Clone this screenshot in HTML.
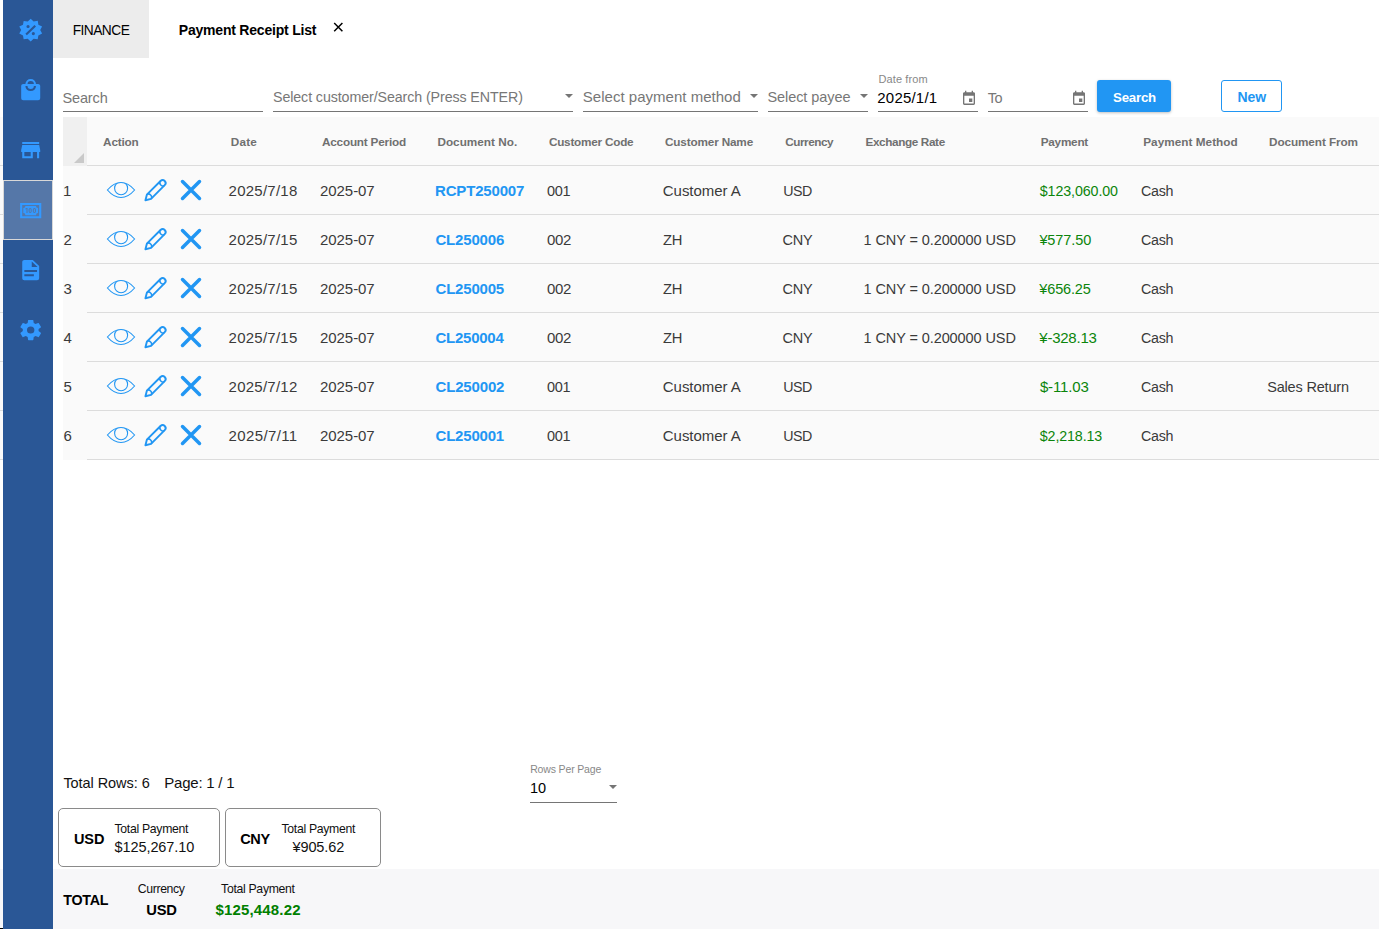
<!DOCTYPE html>
<html><head><meta charset="utf-8"><title>Payment Receipt List</title>
<style>html,body{margin:0;padding:0;background:#fff;}
body{width:1379px;height:929px;overflow:hidden;position:relative;font-family:"Liberation Sans",sans-serif;}
.t{position:absolute;white-space:pre;line-height:20px;height:20px;}
.ico{position:absolute;display:block;overflow:visible}
#strip{position:absolute;left:0;top:117px;width:3px;height:343px;background:#fafafa}
#strip2{position:absolute;left:0;top:869px;width:3px;height:59px;background:#f7f7f9;border-bottom:1px solid #000}
#side{position:absolute;left:3px;top:0;width:50px;height:929px;background:#2a5796}
#sel{position:absolute;left:3px;top:180px;width:50px;height:60px;box-sizing:border-box;border:1px solid #d8d8d8;background:#5577a8}
#tab1{position:absolute;left:53px;top:0;width:96px;height:58px;background:#ececec}
.ul{position:absolute;top:111px;height:1px;background:#757575}
.caret{position:absolute;width:0;height:0;border-left:4px solid transparent;border-right:4px solid transparent;border-top:4px solid #757575}
#btnS{position:absolute;left:1097px;top:80px;width:74px;height:32px;border-radius:3px;background:#2196f3;box-shadow:0 1px 3px rgba(0,0,0,.25)}
#btnN{position:absolute;left:1221px;top:80px;width:61px;height:32px;border-radius:3px;box-sizing:border-box;border:1px solid #2196f3;background:#fff}
#tbl{position:absolute;left:63px;top:117px;width:1316px;height:343px;background:#fafafa}
#corner{position:absolute;left:63px;top:117px;width:24px;height:49px;background:#f0f0f0}
#tri{position:absolute;left:74px;top:153px;width:0;height:0;border-left:10px solid transparent;border-bottom:10px solid #c9c9c9}
.hl{position:absolute;left:87px;width:1292px;height:1px;background:#dcdcdc}
.card{position:absolute;top:808px;height:57px;border:1px solid #8a8a8a;border-radius:5px;background:#fff}
#total{position:absolute;left:53px;top:869px;width:1326px;height:60px;background:#f7f7f9}
.sl{position:absolute;left:0;width:3px;height:1px;background:#dcdcdc}
</style></head>
<body>
<!-- sidebar -->
<div id="strip"></div><div id="strip2"></div><div class="sl" style="top:165px"></div><div class="sl" style="top:214px"></div><div class="sl" style="top:263px"></div><div class="sl" style="top:312px"></div><div class="sl" style="top:361px"></div><div class="sl" style="top:410px"></div><div class="sl" style="top:459px"></div>
<div id="side"></div>
<div id="sel"></div>
<svg class="ico" style="left:17.9px;top:18px" width="25.4" height="24.2" viewBox="0 0 24 24" preserveAspectRatio="none"><path fill="#3399ff" d="M18.65,2.85L19.26,6.71L22.77,8.5L21,12L22.78,15.5L19.24,17.29L18.63,21.15L14.74,20.54L11.97,23.3L9.19,20.5L5.33,21.14L4.71,17.25L1.22,15.47L3,11.97L1.23,8.5L4.74,6.69L5.35,2.86L9.22,3.5L12,0.69L14.77,3.46L18.65,2.85M9.5,7A1.5,1.5 0 0,0 8,8.5A1.5,1.5 0 0,0 9.5,10A1.5,1.5 0 0,0 11,8.5A1.5,1.5 0 0,0 9.5,7M14.5,14A1.5,1.5 0 0,0 13,15.5A1.5,1.5 0 0,0 14.5,17A1.5,1.5 0 0,0 16,15.5A1.5,1.5 0 0,0 14.5,14M8.41,17L17,8.41L15.59,7L7,15.59L8.41,17Z"/></svg>
<svg class="ico" style="left:17.9px;top:78px" width="25.4" height="24.2" viewBox="0 0 24 24" preserveAspectRatio="none"><path fill="#3399ff" d="M12,13A5,5 0 0,1 7,8H9A3,3 0 0,0 12,11A3,3 0 0,0 15,8H17A5,5 0 0,1 12,13M12,3A3,3 0 0,1 15,6H9A3,3 0 0,1 12,3M19,6H17A5,5 0 0,0 12,1A5,5 0 0,0 7,6H5C3.89,6 3,6.89 3,8V20A2,2 0 0,0 5,22H19A2,2 0 0,0 21,20V8C21,6.89 20.1,6 19,6Z"/></svg>
<svg class="ico" style="left:17.9px;top:138px" width="25.4" height="24.2" viewBox="0 0 24 24" preserveAspectRatio="none"><path fill="#3399ff" d="M12,18H6V14H12M21,14V12L20,7H4L3,12V14H4V20H14V14H18V20H20V14M20,4H4V6H20V4Z"/></svg>
<svg class="ico" style="left:17.9px;top:198px" width="25.4" height="24.2" viewBox="0 0 24 24" preserveAspectRatio="none"><path fill="#3399ff" d="M2,5H22V20H2V5M20,18V7H4V18H20M17,8A2,2 0 0,0 19,10V15A2,2 0 0,0 17,17H7A2,2 0 0,0 5,15V10A2,2 0 0,0 7,8H17M17,13V12C17,10.9 16.33,10 15.5,10C14.67,10 14,10.9 14,12V13C14,14.1 14.67,15 15.5,15C16.33,15 17,14.1 17,13M15.5,11A0.5,0.5 0 0,1 16,11.5V13.5A0.5,0.5 0 0,1 15.5,14A0.5,0.5 0 0,1 15,13.5V11.5A0.5,0.5 0 0,1 15.5,11M13,13V12C13,10.9 12.33,10 11.5,10C10.67,10 10,10.9 10,12V13C10,14.1 10.67,15 11.5,15C12.33,15 13,14.1 13,13M11.5,11A0.5,0.5 0 0,1 12,11.5V13.5A0.5,0.5 0 0,1 11.5,14A0.5,0.5 0 0,1 11,13.5V11.5A0.5,0.5 0 0,1 11.5,11M8,15H9V10H8L7,10.5V11.5L8,11V15Z"/></svg>
<svg class="ico" style="left:17.9px;top:258px" width="25.4" height="24.2" viewBox="0 0 24 24" preserveAspectRatio="none"><path fill="#3399ff" d="M13,9H18.5L13,3.5V9M6,2H14L20,8V20A2,2 0 0,1 18,22H6C4.89,22 4,21.1 4,20V4C4,2.89 4.89,2 6,2M15,18V16H6V18H15M18,14V12H6V14H18Z"/></svg>
<svg class="ico" style="left:17.9px;top:318px" width="25.4" height="24.2" viewBox="0 0 24 24" preserveAspectRatio="none"><path fill="#3399ff" d="M12,15.5A3.5,3.5 0 0,1 8.5,12A3.5,3.5 0 0,1 12,8.5A3.5,3.5 0 0,1 15.5,12A3.5,3.5 0 0,1 12,15.5M19.43,12.97C19.47,12.65 19.5,12.33 19.5,12C19.5,11.67 19.47,11.34 19.43,11L21.54,9.37C21.73,9.22 21.78,8.95 21.66,8.73L19.66,5.27C19.54,5.05 19.27,4.96 19.05,5.05L16.56,6.05C16.04,5.66 15.5,5.32 14.87,5.07L14.5,2.42C14.46,2.18 14.25,2 14,2H10C9.75,2 9.54,2.18 9.5,2.42L9.13,5.07C8.5,5.32 7.96,5.66 7.44,6.05L4.95,5.05C4.73,4.96 4.46,5.05 4.34,5.27L2.34,8.73C2.21,8.95 2.27,9.22 2.46,9.37L4.57,11C4.53,11.34 4.5,11.67 4.5,12C4.5,12.33 4.53,12.65 4.57,12.97L2.46,14.63C2.27,14.78 2.21,15.05 2.34,15.27L4.34,18.73C4.46,18.95 4.73,19.03 4.95,18.95L7.44,17.94C7.96,18.34 8.5,18.68 9.13,18.93L9.5,21.58C9.54,21.82 9.75,22 10,22H14C14.25,22 14.46,21.82 14.5,21.58L14.87,18.93C15.5,18.67 16.04,18.34 16.56,17.94L19.05,18.95C19.27,19.03 19.54,18.95 19.66,18.73L21.66,15.27C21.78,15.05 21.73,14.78 21.54,14.63L19.43,12.97Z"/></svg>

<!-- tabs -->
<div id="tab1"></div>
<svg class="ico" style="left:332px;top:21px" width="13" height="13" viewBox="0 0 13 13"><path d="M2.2 2L10.4 10.2M10.4 2L2.2 10.2" stroke="#000" stroke-width="1.5" fill="none"/></svg>

<!-- toolbar underlines -->
<div class="ul" style="left:63px;width:200px"></div>
<div class="ul" style="left:273px;width:300px"></div>
<div class="ul" style="left:583px;width:175px"></div>
<div class="ul" style="left:768px;width:100px"></div>
<div class="ul" style="left:878px;width:100px"></div>
<div class="ul" style="left:988px;width:100px"></div>
<div class="caret" style="left:565px;top:94px"></div>
<div class="caret" style="left:750px;top:94px"></div>
<div class="caret" style="left:860px;top:94px"></div>
<svg class="ico" style="left:961px;top:90px" width="16" height="17" viewBox="0 0 24 24" preserveAspectRatio="none"><path fill="#757575" d="M17 12h-5v5h5v-5zM16 1v2H8V1H6v2H5c-1.11 0-1.99.9-1.99 2L3 19c0 1.1.89 2 2 2h14c1.1 0 2-.9 2-2V5c0-1.1-.9-2-2-2h-1V1h-2zm3 18H5V8h14v11z"/></svg>
<svg class="ico" style="left:1071px;top:90px" width="16" height="17" viewBox="0 0 24 24" preserveAspectRatio="none"><path fill="#757575" d="M17 12h-5v5h5v-5zM16 1v2H8V1H6v2H5c-1.11 0-1.99.9-1.99 2L3 19c0 1.1.89 2 2 2h14c1.1 0 2-.9 2-2V5c0-1.1-.9-2-2-2h-1V1h-2zm3 18H5V8h14v11z"/></svg>
<div id="btnS"></div>
<div id="btnN"></div>

<!-- table -->
<div id="tbl"></div>
<div id="corner"></div>
<div id="tri"></div>
<div class="hl" style="top:165px"></div>
<div class="hl" style="top:214px"></div>
<div class="hl" style="top:263px"></div>
<div class="hl" style="top:312px"></div>
<div class="hl" style="top:361px"></div>
<div class="hl" style="top:410px"></div>
<div class="hl" style="top:459px"></div>
<svg class="ico" style="left:106px;top:181px" width="30" height="18" viewBox="0 0 30 18"><clipPath id="ec181"><path d="M1.4 9C6.2 3.4 10.6 1.5 15 1.5S23.8 3.4 28.6 9C23.8 14.6 19.4 16.5 15 16.5S6.2 14.6 1.4 9Z"/></clipPath><circle cx="15.1" cy="7.2" r="6.5" fill="none" stroke="#2196f3" stroke-width="1.1" clip-path="url(#ec181)"/><path d="M1.4 9C6.2 3.4 10.6 1.5 15 1.5S23.8 3.4 28.6 9C23.8 14.6 19.4 16.5 15 16.5S6.2 14.6 1.4 9Z" fill="none" stroke="#2196f3" stroke-width="1.1"/></svg>
<svg class="ico" style="left:140px;top:175px" width="30" height="30" viewBox="0 0 30 30"><g transform="translate(4.5,26.2) rotate(-45)" fill="none" stroke="#2196f3" stroke-width="1.9" stroke-linejoin="round"><path d="M1.3 0L6.3 -2.95L25.6 -2.95A3 2.95 0 0 1 25.6 2.95L6.3 2.95Z"/><path d="M25.6 -2.95A2.6 2.95 0 0 0 25.6 2.95" stroke-width="1.5"/><path d="M6.3 -2.95A2.4 2.95 0 0 1 6.3 2.95" stroke-width="1.5"/></g></svg>
<svg class="ico" style="left:180px;top:179px" width="22" height="22" viewBox="0 0 22 22"><path d="M2.5 2.5L19.5 19.5M19.5 2.5L2.5 19.5" stroke="#2196f3" stroke-width="3.5" stroke-linecap="round" fill="none"/></svg>
<svg class="ico" style="left:106px;top:230px" width="30" height="18" viewBox="0 0 30 18"><clipPath id="ec230"><path d="M1.4 9C6.2 3.4 10.6 1.5 15 1.5S23.8 3.4 28.6 9C23.8 14.6 19.4 16.5 15 16.5S6.2 14.6 1.4 9Z"/></clipPath><circle cx="15.1" cy="7.2" r="6.5" fill="none" stroke="#2196f3" stroke-width="1.1" clip-path="url(#ec230)"/><path d="M1.4 9C6.2 3.4 10.6 1.5 15 1.5S23.8 3.4 28.6 9C23.8 14.6 19.4 16.5 15 16.5S6.2 14.6 1.4 9Z" fill="none" stroke="#2196f3" stroke-width="1.1"/></svg>
<svg class="ico" style="left:140px;top:224px" width="30" height="30" viewBox="0 0 30 30"><g transform="translate(4.5,26.2) rotate(-45)" fill="none" stroke="#2196f3" stroke-width="1.9" stroke-linejoin="round"><path d="M1.3 0L6.3 -2.95L25.6 -2.95A3 2.95 0 0 1 25.6 2.95L6.3 2.95Z"/><path d="M25.6 -2.95A2.6 2.95 0 0 0 25.6 2.95" stroke-width="1.5"/><path d="M6.3 -2.95A2.4 2.95 0 0 1 6.3 2.95" stroke-width="1.5"/></g></svg>
<svg class="ico" style="left:180px;top:228px" width="22" height="22" viewBox="0 0 22 22"><path d="M2.5 2.5L19.5 19.5M19.5 2.5L2.5 19.5" stroke="#2196f3" stroke-width="3.5" stroke-linecap="round" fill="none"/></svg>
<svg class="ico" style="left:106px;top:279px" width="30" height="18" viewBox="0 0 30 18"><clipPath id="ec279"><path d="M1.4 9C6.2 3.4 10.6 1.5 15 1.5S23.8 3.4 28.6 9C23.8 14.6 19.4 16.5 15 16.5S6.2 14.6 1.4 9Z"/></clipPath><circle cx="15.1" cy="7.2" r="6.5" fill="none" stroke="#2196f3" stroke-width="1.1" clip-path="url(#ec279)"/><path d="M1.4 9C6.2 3.4 10.6 1.5 15 1.5S23.8 3.4 28.6 9C23.8 14.6 19.4 16.5 15 16.5S6.2 14.6 1.4 9Z" fill="none" stroke="#2196f3" stroke-width="1.1"/></svg>
<svg class="ico" style="left:140px;top:273px" width="30" height="30" viewBox="0 0 30 30"><g transform="translate(4.5,26.2) rotate(-45)" fill="none" stroke="#2196f3" stroke-width="1.9" stroke-linejoin="round"><path d="M1.3 0L6.3 -2.95L25.6 -2.95A3 2.95 0 0 1 25.6 2.95L6.3 2.95Z"/><path d="M25.6 -2.95A2.6 2.95 0 0 0 25.6 2.95" stroke-width="1.5"/><path d="M6.3 -2.95A2.4 2.95 0 0 1 6.3 2.95" stroke-width="1.5"/></g></svg>
<svg class="ico" style="left:180px;top:277px" width="22" height="22" viewBox="0 0 22 22"><path d="M2.5 2.5L19.5 19.5M19.5 2.5L2.5 19.5" stroke="#2196f3" stroke-width="3.5" stroke-linecap="round" fill="none"/></svg>
<svg class="ico" style="left:106px;top:328px" width="30" height="18" viewBox="0 0 30 18"><clipPath id="ec328"><path d="M1.4 9C6.2 3.4 10.6 1.5 15 1.5S23.8 3.4 28.6 9C23.8 14.6 19.4 16.5 15 16.5S6.2 14.6 1.4 9Z"/></clipPath><circle cx="15.1" cy="7.2" r="6.5" fill="none" stroke="#2196f3" stroke-width="1.1" clip-path="url(#ec328)"/><path d="M1.4 9C6.2 3.4 10.6 1.5 15 1.5S23.8 3.4 28.6 9C23.8 14.6 19.4 16.5 15 16.5S6.2 14.6 1.4 9Z" fill="none" stroke="#2196f3" stroke-width="1.1"/></svg>
<svg class="ico" style="left:140px;top:322px" width="30" height="30" viewBox="0 0 30 30"><g transform="translate(4.5,26.2) rotate(-45)" fill="none" stroke="#2196f3" stroke-width="1.9" stroke-linejoin="round"><path d="M1.3 0L6.3 -2.95L25.6 -2.95A3 2.95 0 0 1 25.6 2.95L6.3 2.95Z"/><path d="M25.6 -2.95A2.6 2.95 0 0 0 25.6 2.95" stroke-width="1.5"/><path d="M6.3 -2.95A2.4 2.95 0 0 1 6.3 2.95" stroke-width="1.5"/></g></svg>
<svg class="ico" style="left:180px;top:326px" width="22" height="22" viewBox="0 0 22 22"><path d="M2.5 2.5L19.5 19.5M19.5 2.5L2.5 19.5" stroke="#2196f3" stroke-width="3.5" stroke-linecap="round" fill="none"/></svg>
<svg class="ico" style="left:106px;top:377px" width="30" height="18" viewBox="0 0 30 18"><clipPath id="ec377"><path d="M1.4 9C6.2 3.4 10.6 1.5 15 1.5S23.8 3.4 28.6 9C23.8 14.6 19.4 16.5 15 16.5S6.2 14.6 1.4 9Z"/></clipPath><circle cx="15.1" cy="7.2" r="6.5" fill="none" stroke="#2196f3" stroke-width="1.1" clip-path="url(#ec377)"/><path d="M1.4 9C6.2 3.4 10.6 1.5 15 1.5S23.8 3.4 28.6 9C23.8 14.6 19.4 16.5 15 16.5S6.2 14.6 1.4 9Z" fill="none" stroke="#2196f3" stroke-width="1.1"/></svg>
<svg class="ico" style="left:140px;top:371px" width="30" height="30" viewBox="0 0 30 30"><g transform="translate(4.5,26.2) rotate(-45)" fill="none" stroke="#2196f3" stroke-width="1.9" stroke-linejoin="round"><path d="M1.3 0L6.3 -2.95L25.6 -2.95A3 2.95 0 0 1 25.6 2.95L6.3 2.95Z"/><path d="M25.6 -2.95A2.6 2.95 0 0 0 25.6 2.95" stroke-width="1.5"/><path d="M6.3 -2.95A2.4 2.95 0 0 1 6.3 2.95" stroke-width="1.5"/></g></svg>
<svg class="ico" style="left:180px;top:375px" width="22" height="22" viewBox="0 0 22 22"><path d="M2.5 2.5L19.5 19.5M19.5 2.5L2.5 19.5" stroke="#2196f3" stroke-width="3.5" stroke-linecap="round" fill="none"/></svg>
<svg class="ico" style="left:106px;top:426px" width="30" height="18" viewBox="0 0 30 18"><clipPath id="ec426"><path d="M1.4 9C6.2 3.4 10.6 1.5 15 1.5S23.8 3.4 28.6 9C23.8 14.6 19.4 16.5 15 16.5S6.2 14.6 1.4 9Z"/></clipPath><circle cx="15.1" cy="7.2" r="6.5" fill="none" stroke="#2196f3" stroke-width="1.1" clip-path="url(#ec426)"/><path d="M1.4 9C6.2 3.4 10.6 1.5 15 1.5S23.8 3.4 28.6 9C23.8 14.6 19.4 16.5 15 16.5S6.2 14.6 1.4 9Z" fill="none" stroke="#2196f3" stroke-width="1.1"/></svg>
<svg class="ico" style="left:140px;top:420px" width="30" height="30" viewBox="0 0 30 30"><g transform="translate(4.5,26.2) rotate(-45)" fill="none" stroke="#2196f3" stroke-width="1.9" stroke-linejoin="round"><path d="M1.3 0L6.3 -2.95L25.6 -2.95A3 2.95 0 0 1 25.6 2.95L6.3 2.95Z"/><path d="M25.6 -2.95A2.6 2.95 0 0 0 25.6 2.95" stroke-width="1.5"/><path d="M6.3 -2.95A2.4 2.95 0 0 1 6.3 2.95" stroke-width="1.5"/></g></svg>
<svg class="ico" style="left:180px;top:424px" width="22" height="22" viewBox="0 0 22 22"><path d="M2.5 2.5L19.5 19.5M19.5 2.5L2.5 19.5" stroke="#2196f3" stroke-width="3.5" stroke-linecap="round" fill="none"/></svg>

<!-- bottom -->
<div class="ul" style="left:530px;width:87px;top:802px"></div>
<div class="caret" style="left:609px;top:785px"></div>
<div class="card" style="left:58px;width:160px"></div>
<div class="card" style="left:225px;width:154px"></div>
<div id="total"></div>

<span class="t" style="left:72.7px;top:21px;font-size:13.75px;color:#000;letter-spacing:-0.54px">FINANCE</span>
<span class="t" style="left:178.8px;top:20px;font-size:14px;color:#000;font-weight:700;letter-spacing:-0.21px">Payment Receipt List</span>
<span class="t" style="left:62.5px;top:88px;font-size:14.5px;color:#777;letter-spacing:-0.15px">Search</span>
<span class="t" style="left:273.0px;top:87px;font-size:14.25px;color:#777;letter-spacing:-0.1px">Select customer/Search (Press ENTER)</span>
<span class="t" style="left:582.8px;top:87px;font-size:15px;color:#777;letter-spacing:0.02px">Select payment method</span>
<span class="t" style="left:767.4px;top:87px;font-size:14.5px;color:#777;letter-spacing:-0.06px">Select payee</span>
<span class="t" style="left:878.5px;top:69px;font-size:11px;color:#888;letter-spacing:0.1px">Date from</span>
<span class="t" style="left:877.3px;top:88px;font-size:15px;color:#000;letter-spacing:0.2px">2025/1/1</span>
<span class="t" style="left:987.7px;top:88px;font-size:14.5px;color:#777;letter-spacing:-0.34px">To</span>
<span class="t" style="left:1113.0px;top:88px;font-size:13.25px;color:#fff;font-weight:700;letter-spacing:-0.2px">Search</span>
<span class="t" style="left:1237.5px;top:87px;font-size:14px;color:#2196f3;font-weight:700;letter-spacing:-0.04px">New</span>
<span class="t" style="left:103.1px;top:132px;font-size:11.75px;color:#707070;font-weight:700;letter-spacing:-0.18px">Action</span>
<span class="t" style="left:230.7px;top:132px;font-size:11.75px;color:#707070;font-weight:700;letter-spacing:0.24px">Date</span>
<span class="t" style="left:322.0px;top:132px;font-size:11.75px;color:#707070;font-weight:700;letter-spacing:-0.21px">Account Period</span>
<span class="t" style="left:437.4px;top:132px;font-size:11.75px;color:#707070;font-weight:700;letter-spacing:0.02px">Document No.</span>
<span class="t" style="left:548.9px;top:132px;font-size:11.75px;color:#707070;font-weight:700;letter-spacing:-0.23px">Customer Code</span>
<span class="t" style="left:665.0px;top:132px;font-size:11.75px;color:#707070;font-weight:700;letter-spacing:-0.16px">Customer Name</span>
<span class="t" style="left:785.2px;top:132px;font-size:11.75px;color:#707070;font-weight:700;letter-spacing:-0.45px">Currency</span>
<span class="t" style="left:865.5px;top:132px;font-size:11.75px;color:#707070;font-weight:700;letter-spacing:-0.38px">Exchange Rate</span>
<span class="t" style="left:1040.7px;top:132px;font-size:11.75px;color:#707070;font-weight:700;letter-spacing:-0.23px">Payment</span>
<span class="t" style="left:1143.2px;top:132px;font-size:11.75px;color:#707070;font-weight:700;letter-spacing:0.04px">Payment Method</span>
<span class="t" style="left:1269.0px;top:132px;font-size:11.75px;color:#707070;font-weight:700;letter-spacing:-0.09px">Document From</span>
<span class="t" style="left:63.1px;top:181px;font-size:15px;color:#3a3a3a">1</span>
<span class="t" style="left:228.6px;top:181px;font-size:15px;color:#3a3a3a;letter-spacing:0.24px">2025/7/18</span>
<span class="t" style="left:320.0px;top:181px;font-size:15px;color:#3a3a3a;letter-spacing:-0.06px">2025-07</span>
<span class="t" style="left:435.0px;top:181px;font-size:15px;color:#2196f3;font-weight:700;letter-spacing:-0.17px">RCPT250007</span>
<span class="t" style="left:547.0px;top:181px;font-size:14.5px;color:#3a3a3a;letter-spacing:-0.26px">001</span>
<span class="t" style="left:662.8px;top:181px;font-size:15px;color:#3a3a3a;letter-spacing:-0.04px">Customer A</span>
<span class="t" style="left:783.2px;top:181px;font-size:14.25px;color:#3a3a3a;letter-spacing:-0.49px">USD</span>
<span class="t" style="left:1039.8px;top:181px;font-size:14.25px;color:#0b850b;letter-spacing:-0.1px">$123,060.00</span>
<span class="t" style="left:1141.1px;top:181px;font-size:14.25px;color:#3a3a3a;letter-spacing:-0.28px">Cash</span>
<span class="t" style="left:63.5px;top:230px;font-size:15px;color:#3a3a3a">2</span>
<span class="t" style="left:228.6px;top:230px;font-size:15px;color:#3a3a3a;letter-spacing:0.24px">2025/7/15</span>
<span class="t" style="left:320.0px;top:230px;font-size:15px;color:#3a3a3a;letter-spacing:-0.06px">2025-07</span>
<span class="t" style="left:435.4px;top:230px;font-size:15px;color:#2196f3;font-weight:700;letter-spacing:-0.16px">CL250006</span>
<span class="t" style="left:547.0px;top:230px;font-size:15px;color:#3a3a3a;letter-spacing:-0.29px">002</span>
<span class="t" style="left:663.0px;top:230px;font-size:14.75px;color:#3a3a3a;letter-spacing:-0.16px">ZH</span>
<span class="t" style="left:782.5px;top:230px;font-size:14.5px;color:#3a3a3a;letter-spacing:-0.24px">CNY</span>
<span class="t" style="left:863.5px;top:230px;font-size:14.5px;color:#3a3a3a;letter-spacing:-0.09px">1 CNY = 0.200000 USD</span>
<span class="t" style="left:1039.4px;top:230px;font-size:14.5px;color:#0b850b;letter-spacing:-0.1px">¥577.50</span>
<span class="t" style="left:1141.1px;top:230px;font-size:14.25px;color:#3a3a3a;letter-spacing:-0.28px">Cash</span>
<span class="t" style="left:63.6px;top:279px;font-size:15px;color:#3a3a3a">3</span>
<span class="t" style="left:228.6px;top:279px;font-size:15px;color:#3a3a3a;letter-spacing:0.24px">2025/7/15</span>
<span class="t" style="left:320.0px;top:279px;font-size:15px;color:#3a3a3a;letter-spacing:-0.06px">2025-07</span>
<span class="t" style="left:435.5px;top:279px;font-size:15px;color:#2196f3;font-weight:700;letter-spacing:-0.2px">CL250005</span>
<span class="t" style="left:547.0px;top:279px;font-size:15px;color:#3a3a3a;letter-spacing:-0.29px">002</span>
<span class="t" style="left:663.0px;top:279px;font-size:14.75px;color:#3a3a3a;letter-spacing:-0.16px">ZH</span>
<span class="t" style="left:782.5px;top:279px;font-size:14.5px;color:#3a3a3a;letter-spacing:-0.24px">CNY</span>
<span class="t" style="left:863.5px;top:279px;font-size:14.5px;color:#3a3a3a;letter-spacing:-0.09px">1 CNY = 0.200000 USD</span>
<span class="t" style="left:1039.3px;top:279px;font-size:14.5px;color:#0b850b;letter-spacing:-0.15px">¥656.25</span>
<span class="t" style="left:1141.1px;top:279px;font-size:14.25px;color:#3a3a3a;letter-spacing:-0.28px">Cash</span>
<span class="t" style="left:63.6px;top:328px;font-size:15px;color:#3a3a3a">4</span>
<span class="t" style="left:228.6px;top:328px;font-size:15px;color:#3a3a3a;letter-spacing:0.24px">2025/7/15</span>
<span class="t" style="left:320.0px;top:328px;font-size:15px;color:#3a3a3a;letter-spacing:-0.06px">2025-07</span>
<span class="t" style="left:435.4px;top:328px;font-size:15px;color:#2196f3;font-weight:700;letter-spacing:-0.23px">CL250004</span>
<span class="t" style="left:547.0px;top:328px;font-size:15px;color:#3a3a3a;letter-spacing:-0.29px">002</span>
<span class="t" style="left:663.0px;top:328px;font-size:14.75px;color:#3a3a3a;letter-spacing:-0.16px">ZH</span>
<span class="t" style="left:782.5px;top:328px;font-size:14.5px;color:#3a3a3a;letter-spacing:-0.24px">CNY</span>
<span class="t" style="left:863.5px;top:328px;font-size:14.5px;color:#3a3a3a;letter-spacing:-0.09px">1 CNY = 0.200000 USD</span>
<span class="t" style="left:1039.3px;top:328px;font-size:15px;color:#0b850b;letter-spacing:-0.24px">¥-328.13</span>
<span class="t" style="left:1141.1px;top:328px;font-size:14.25px;color:#3a3a3a;letter-spacing:-0.28px">Cash</span>
<span class="t" style="left:63.5px;top:377px;font-size:15px;color:#3a3a3a">5</span>
<span class="t" style="left:228.6px;top:377px;font-size:15px;color:#3a3a3a;letter-spacing:0.24px">2025/7/12</span>
<span class="t" style="left:320.0px;top:377px;font-size:15px;color:#3a3a3a;letter-spacing:-0.06px">2025-07</span>
<span class="t" style="left:435.5px;top:377px;font-size:15px;color:#2196f3;font-weight:700;letter-spacing:-0.16px">CL250002</span>
<span class="t" style="left:547.0px;top:377px;font-size:14.5px;color:#3a3a3a;letter-spacing:-0.26px">001</span>
<span class="t" style="left:662.8px;top:377px;font-size:15px;color:#3a3a3a;letter-spacing:-0.04px">Customer A</span>
<span class="t" style="left:783.2px;top:377px;font-size:14.25px;color:#3a3a3a;letter-spacing:-0.49px">USD</span>
<span class="t" style="left:1039.9px;top:377px;font-size:15px;color:#0b850b;letter-spacing:-0.14px">$-11.03</span>
<span class="t" style="left:1141.1px;top:377px;font-size:14.25px;color:#3a3a3a;letter-spacing:-0.28px">Cash</span>
<span class="t" style="left:1267.2px;top:377px;font-size:14.5px;color:#3a3a3a;letter-spacing:-0.18px">Sales Return</span>
<span class="t" style="left:63.5px;top:426px;font-size:15px;color:#3a3a3a">6</span>
<span class="t" style="left:228.6px;top:426px;font-size:15px;color:#3a3a3a;letter-spacing:0.37px">2025/7/11</span>
<span class="t" style="left:320.0px;top:426px;font-size:15px;color:#3a3a3a;letter-spacing:-0.06px">2025-07</span>
<span class="t" style="left:435.5px;top:426px;font-size:15px;color:#2196f3;font-weight:700;letter-spacing:-0.2px">CL250001</span>
<span class="t" style="left:547.0px;top:426px;font-size:14.5px;color:#3a3a3a;letter-spacing:-0.26px">001</span>
<span class="t" style="left:662.8px;top:426px;font-size:15px;color:#3a3a3a;letter-spacing:-0.04px">Customer A</span>
<span class="t" style="left:783.2px;top:426px;font-size:14.25px;color:#3a3a3a;letter-spacing:-0.49px">USD</span>
<span class="t" style="left:1039.8px;top:426px;font-size:14.25px;color:#0b850b;letter-spacing:-0.12px">$2,218.13</span>
<span class="t" style="left:1141.1px;top:426px;font-size:14.25px;color:#3a3a3a;letter-spacing:-0.28px">Cash</span>
<span class="t" style="left:63.4px;top:773px;font-size:14.5px;color:#111;letter-spacing:-0.06px">Total Rows: 6</span>
<span class="t" style="left:164.3px;top:773px;font-size:15px;color:#111;letter-spacing:-0.23px">Page: 1 / 1</span>
<span class="t" style="left:530.2px;top:759px;font-size:10.5px;color:#888;letter-spacing:-0.15px">Rows Per Page</span>
<span class="t" style="left:530.0px;top:778px;font-size:14.5px;color:#000;letter-spacing:-0.18px">10</span>
<span class="t" style="left:74.0px;top:829px;font-size:14.5px;color:#000;font-weight:700;letter-spacing:-0.12px">USD</span>
<span class="t" style="left:114.5px;top:819px;font-size:12.25px;color:#111;letter-spacing:-0.3px">Total Payment</span>
<span class="t" style="left:114.6px;top:837px;font-size:14.5px;color:#111;letter-spacing:-0.1px">$125,267.10</span>
<span class="t" style="left:240.2px;top:829px;font-size:14.5px;color:#000;font-weight:700;letter-spacing:-0.3px">CNY</span>
<span class="t" style="left:281.5px;top:819px;font-size:12.25px;color:#111;letter-spacing:-0.31px">Total Payment</span>
<span class="t" style="left:292.5px;top:837px;font-size:14.5px;color:#111;letter-spacing:-0.12px">¥905.62</span>
<span class="t" style="left:63.3px;top:890px;font-size:14.25px;color:#000;font-weight:700;letter-spacing:-0.27px">TOTAL</span>
<span class="t" style="left:137.8px;top:879px;font-size:12.25px;color:#111;letter-spacing:-0.37px">Currency</span>
<span class="t" style="left:146.2px;top:900px;font-size:14.75px;color:#000;font-weight:700;letter-spacing:-0.21px">USD</span>
<span class="t" style="left:221.1px;top:879px;font-size:12.25px;color:#111;letter-spacing:-0.31px">Total Payment</span>
<span class="t" style="left:215.5px;top:900px;font-size:15px;color:#008000;font-weight:700;letter-spacing:0.16px">$125,448.22</span>
</body></html>
